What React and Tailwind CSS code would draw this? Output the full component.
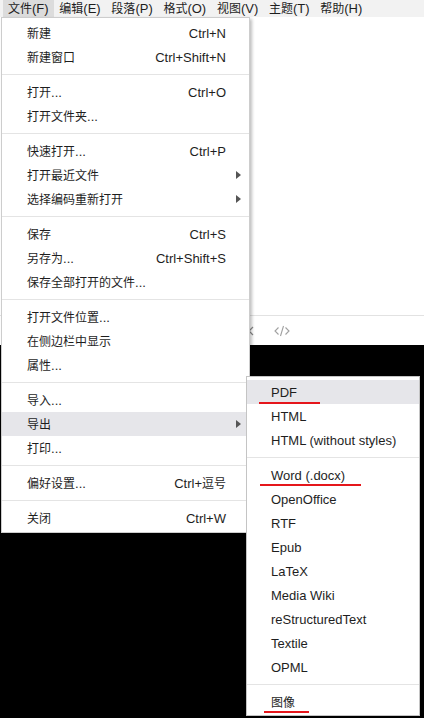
import React from 'react';

const CJK = /([\u3000-\u9fff]+)/;

function T({ s }) {
  return s.split(CJK).map((p, i) =>
    /[\u3000-\u9fff]/.test(p) ? (
      <span key={i} className="text-[12px]">{p}</span>
    ) : (
      p
    )
  );
}

const topMenus = ['文件(F)', '编辑(E)', '段落(P)', '格式(O)', '视图(V)', '主题(T)', '帮助(H)'];

const fileMenu = [
  [{ label: '新建', key: 'Ctrl+N' }, { label: '新建窗口', key: 'Ctrl+Shift+N' }],
  [{ label: '打开...', key: 'Ctrl+O' }, { label: '打开文件夹...' }],
  [{ label: '快速打开...', key: 'Ctrl+P' }, { label: '打开最近文件', sub: true }, { label: '选择编码重新打开', sub: true }],
  [{ label: '保存', key: 'Ctrl+S' }, { label: '另存为...', key: 'Ctrl+Shift+S' }, { label: '保存全部打开的文件...' }],
  [{ label: '打开文件位置...' }, { label: '在侧边栏中显示' }, { label: '属性...' }],
  [{ label: '导入...' }, { label: '导出', sub: true, active: true }, { label: '打印...' }],
  [{ label: '偏好设置...', key: 'Ctrl+逗号' }],
  [{ label: '关闭', key: 'Ctrl+W' }],
];

const exportMenu = [
  [{ label: 'PDF', active: true, mark: 'left-[12px] w-[61px] top-[22px]' }, { label: 'HTML' }, { label: 'HTML (without styles)' }],
  [
    { label: 'Word (.docx)', mark: 'left-[13px] w-[101px] top-[21px]' },
    { label: 'OpenOffice' },
    { label: 'RTF' },
    { label: 'Epub' },
    { label: 'LaTeX' },
    { label: 'Media Wiki' },
    { label: 'reStructuredText' },
    { label: 'Textile' },
    { label: 'OPML' },
  ],
  [{ label: '图像', mark: 'left-[17px] w-[45px] top-[21px]' }],
];

function Arrow() {
  return (
    <svg className="absolute right-[8px] top-[8px]" width="5" height="8" viewBox="0 0 5 8">
      <path d="M0 0 L5 4 L0 8 Z" fill="#555" />
    </svg>
  );
}

function Menu({ groups, className, itemPad }) {
  return (
    <div className={className}>
      {groups.map((group, gi) => (
        <div key={gi}>
          {gi > 0 && <div className="h-px bg-[#e4e4e4] my-[5px]" />}
          {group.map((item) => (
            <div
              key={item.label}
              className={`relative h-6 flex items-center justify-between ${itemPad} ${item.active ? 'bg-[#e6e6ea]' : ''}`}
            >
              <span>
                <T s={item.label} />
              </span>
              {item.key && (
                <span>
                  <T s={item.key} />
                </span>
              )}
              {item.sub && <Arrow />}
              {item.mark && <span className={`absolute h-[2px] bg-[#e5161b] ${item.mark}`} />}
            </div>
          ))}
        </div>
      ))}
    </div>
  );
}

export default function App() {
  return (
    <div className="relative w-[424px] h-[718px] overflow-hidden bg-black text-[13px] leading-none text-[#1e1e1e] font-['Liberation_Sans','Noto_Sans_CJK_SC',sans-serif]">
      <div className="h-[17px] bg-[#f2f2f2] flex items-center pl-[3px]">
        {topMenus.map((m, i) => (
          <div
            key={m}
            className={`h-full flex items-center pl-[5px] pr-[5.7px] ${i === 0 ? 'bg-[#dcdcdc]' : ''}`}
          >
            <T s={m} />
          </div>
        ))}
      </div>

      <div className="h-[328px] bg-white flex flex-col">
        <div className="flex-1" />
        <div className="h-[30px] border-t border-[#e2e2e2] flex items-center gap-[20px] pl-[248px]">
          <svg width="6" height="10" viewBox="0 0 6 10">
            <path d="M5 1 L1 5 L5 9" fill="none" stroke="#8a8a8a" strokeWidth="1.2" />
          </svg>
          <svg width="16" height="12" viewBox="0 0 16 12">
            <path d="M4.5 2.5 L1 6 L4.5 9.5 M11.5 2.5 L15 6 L11.5 9.5 M9.5 1 L6.5 11" fill="none" stroke="#a0a0a0" strokeWidth="1.1" />
          </svg>
        </div>
      </div>

      <Menu
        groups={fileMenu}
        itemPad="pl-[25px] pr-[23px]"
        className="absolute left-[1px] top-[17px] w-[249px] bg-white border border-[#cdcdcd] pt-[3px] pb-[2px] shadow-[2px_2px_3px_rgba(0,0,0,0.25)]"
      />

      <Menu
        groups={exportMenu}
        itemPad="pl-[24px] pr-[10px]"
        className="absolute left-[246px] top-[376px] w-[174px] bg-white border border-[#c4c4c4] pt-[3px] pb-[1px]"
      />
    </div>
  );
}
